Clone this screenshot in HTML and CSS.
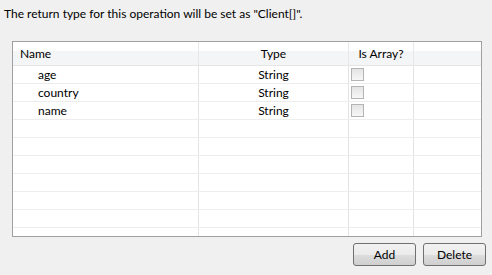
FILE: index.html
```html
<!DOCTYPE html>
<html>
<head>
<meta charset="utf-8">
<link rel="stylesheet" href="styles.css">
</head>
<body>
<div class="title">The return type for this operation will be set as "Client[]".</div>
<div class="table">
  <div class="row head">
    <div class="cell c-name">Name</div>
    <div class="cell c-type center">Type</div>
    <div class="cell c-arr center">Is Array?</div>
    <div class="cell c-fill"></div>
  </div>
  <div class="row">
    <div class="cell c-name indent">age</div>
    <div class="cell c-type center">String</div>
    <div class="cell c-arr"><span class="check"></span></div>
    <div class="cell c-fill"></div>
  </div>
  <div class="row">
    <div class="cell c-name indent">country</div>
    <div class="cell c-type center">String</div>
    <div class="cell c-arr"><span class="check"></span></div>
    <div class="cell c-fill"></div>
  </div>
  <div class="row">
    <div class="cell c-name indent">name</div>
    <div class="cell c-type center">String</div>
    <div class="cell c-arr"><span class="check"></span></div>
    <div class="cell c-fill"></div>
  </div>
  <div class="row"><div class="cell c-name"></div><div class="cell c-type"></div><div class="cell c-arr"></div><div class="cell c-fill"></div></div>
  <div class="row"><div class="cell c-name"></div><div class="cell c-type"></div><div class="cell c-arr"></div><div class="cell c-fill"></div></div>
  <div class="row"><div class="cell c-name"></div><div class="cell c-type"></div><div class="cell c-arr"></div><div class="cell c-fill"></div></div>
  <div class="row"><div class="cell c-name"></div><div class="cell c-type"></div><div class="cell c-arr"></div><div class="cell c-fill"></div></div>
  <div class="row"><div class="cell c-name"></div><div class="cell c-type"></div><div class="cell c-arr"></div><div class="cell c-fill"></div></div>
  <div class="row"><div class="cell c-name"></div><div class="cell c-type"></div><div class="cell c-arr"></div><div class="cell c-fill"></div></div>
  <div class="row"><div class="cell c-name"></div><div class="cell c-type"></div><div class="cell c-arr"></div><div class="cell c-fill"></div></div>
</div>
<div class="buttons">
  <button class="btn">Add</button>
  <button class="btn">Delete</button>
</div>
</body>
</html>
```
FILE: styles.css
```css
html, body {
  margin: 0;
  padding: 0;
  background: #f0f0f0;
  font-family: Lato, "Noto Sans", sans-serif;
  font-size: 12px;
  color: #000;
}
.title {
  padding: 6px 0 0 4px;
  height: 16px;
  line-height: 16px;
  white-space: nowrap;
}
.table {
  margin: 19px 0 0 12px;
  width: 468px;
  height: 194px;
  border: 1px solid #a0a0a0;
  background: #fff;
  overflow: hidden;
}
.row {
  display: flex;
  height: 17px;
  border-bottom: 1px solid #ededed;
}
.row.head {
  height: 23px;
  border-bottom: 1px solid #e5e5e5;
  background: linear-gradient(#ffffff 0, #ffffff 9px, #f4f5f7 9px, #f4f5f7 100%);
}
.cell {
  box-sizing: border-box;
  border-right: 1px solid #e3e3e3;
  line-height: 17px;
  white-space: nowrap;
  overflow: hidden;
}
.head .cell {
  padding-top: 1px;
  line-height: 22px;
  border-right-color: #e8e8e8;
}
.c-name { width: 186px; padding-left: 7px; }
.c-name.indent { padding-left: 25px; }
.c-type { width: 150px; }
.c-arr { width: 65px; padding-left: 2px; }
.c-fill { flex: 1; border-right: none; }
.center { text-align: center; }
.head .c-arr { padding-left: 0; }
.check {
  display: inline-block;
  box-sizing: border-box;
  width: 13px;
  height: 13px;
  margin-top: 2px;
  vertical-align: top;
  border: 1px solid #b4b4b4;
  background: linear-gradient(#e4e4e4, #f7f7f7);
}
.buttons {
  display: flex;
  justify-content: flex-end;
  gap: 7px;
  margin-top: 6px;
  padding-right: 6px;
}
.btn {
  box-sizing: border-box;
  width: 63px;
  height: 23px;
  margin: 0;
  padding: 0;
  border: 1px solid #707070;
  border-radius: 3px;
  background: linear-gradient(#f2f2f2 0, #ebebeb 50%, #dddddd 50%, #cfcfcf 100%);
  font-family: Lato, "Noto Sans", sans-serif;
  font-size: 12px;
  color: #000;
}
```
